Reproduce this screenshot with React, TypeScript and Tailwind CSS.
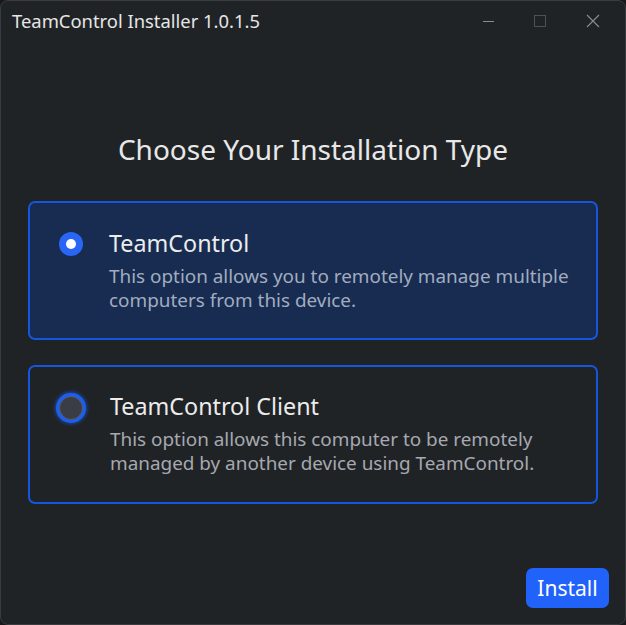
import React from "react";

export default function App() {
  const font = { fontFamily: '"Noto Sans", "Open Sans", sans-serif' };
  return (
    <div className="w-[626px] h-[625px] bg-[#19191b]" style={font}>
      <div className="w-full h-full rounded-[8px] border border-[#3a3b3e] bg-[#202326] flex flex-col overflow-hidden">
        {/* Title bar */}
        <div className="h-[40px] flex items-center pl-[11px] shrink-0">
          <div className="text-[18.4px] text-[#e6e6e6] leading-none mt-[1px]">TeamControl Installer 1.0.1.5</div>
          <div className="ml-auto flex items-center h-full pr-[6px]">
            <div className="w-[50px] h-full flex items-center justify-center">
              <div className="w-[11px] h-[1px] bg-[#8a8b8e]" />
            </div>
            <div className="w-[54px] h-full flex items-center justify-center">
              <div className="w-[12px] h-[12px] border border-[#4f5054]" />
            </div>
            <div className="w-[52px] h-full flex items-center justify-center">
              <svg width="14" height="14" viewBox="0 0 14 14">
                <path d="M1 1 L13 13 M13 1 L1 13" stroke="#8a8b8e" strokeWidth="1.1" />
              </svg>
            </div>
          </div>
        </div>

        {/* Content */}
        <div className="flex-1 flex flex-col px-[27px]">
          <h1 className="text-center text-[28px] text-[#e8e8e8] mt-[90px] leading-[36px]">
            Choose Your Installation Type
          </h1>

          <div className="mt-[34px] flex flex-col gap-[25px]">
            <div className="h-[139px] rounded-[7px] border-2 border-[#1456de] bg-[#172c50] flex items-start pl-[29px] pt-[27px]">
              <div className="w-[24px] h-[24px] rounded-full bg-[#2a66f5] flex items-center justify-center mt-[2px] shrink-0">
                <div className="w-[10px] h-[10px] rounded-full bg-white" />
              </div>
              <div className="ml-[26px] -mt-[1px]">
                <div className="text-[23.3px] text-[#ececec] leading-[28px]">TeamControl</div>
                <div className="text-[18.9px] text-[#a2acc0] leading-[24px] mt-[7px]">
                  This option allows you to remotely manage multiple
                  <br />
                  computers from this device.
                </div>
              </div>
            </div>

            <div className="h-[139px] rounded-[7px] border-2 border-[#1456de] bg-[#202326] flex items-start pl-[26px] pt-[26px]">
              <div className="w-[30px] h-[30px] rounded-full bg-[#1a5ff0] shadow-[0_0_4px_#1a5ff0] flex items-center justify-center shrink-0">
                <div className="w-[24px] h-[24px] rounded-full bg-[#3a3d46] border-[1.5px] border-[#5a5d66]" />
              </div>
              <div className="ml-[24px] -mt-[1px]">
                <div className="text-[23.3px] text-[#ececec] leading-[28px]">TeamControl Client</div>
                <div className="text-[18.9px] text-[#a6a9b0] leading-[24px] mt-[7px]">
                  This option allows this computer to be remotely
                  <br />
                  managed by another device using TeamControl.
                </div>
              </div>
            </div>
          </div>

          <div className="mt-auto mb-[16px] flex justify-end">
            <button className="w-[83px] h-[40px] rounded-[7px] bg-[#2162fb] text-white text-[21px] leading-none -mr-[11px]">
              Install
            </button>
          </div>
        </div>
      </div>
    </div>
  );
}
